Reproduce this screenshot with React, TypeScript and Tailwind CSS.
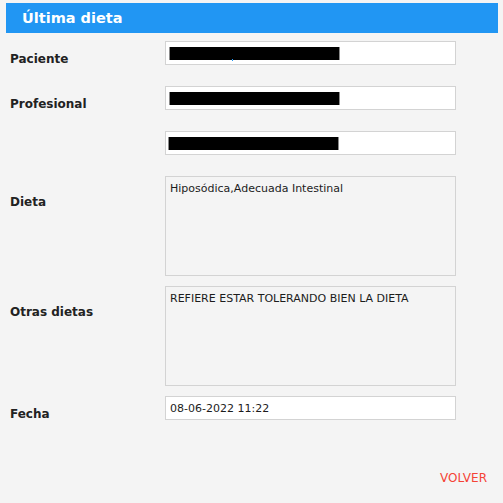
import React from "react";

const font = { fontFamily: '"DejaVu Sans", Verdana, sans-serif' };

const Label = ({ text, pad }: { text: string; pad: string }) => (
  <div className={`w-[165px] shrink-0 pl-[10px] text-[12px] leading-[12px] font-bold text-[#222] ${pad}`}>
    {text}
  </div>
);

const Redacted = ({ inset }: { inset: string }) => (
  <div className={`h-[24px] w-[291px] border border-[#d3d3d3] bg-white pt-[5px] ${inset}`}>
    <div className="h-[13px] w-[171px] bg-black border-x border-[#8a8a8a]" />
  </div>
);

export default function App() {
  return (
    <div className="min-h-screen w-full bg-[#f4f4f4] pt-[3px]" style={font}>
      <div className="ml-[6px] mr-[5px] flex h-[30px] items-center bg-[#2196f3] pl-4 pt-[2px] text-[14.5px] font-bold text-white">
        Última dieta
      </div>

      <div className="mt-[8px] flex h-[24px]">
        <Label text="Paciente" pad="pt-[12px]" />
        <div className="relative">
          <Redacted inset="pl-[3px]" />
          <span className="absolute left-[67px] top-[18px] h-[2px] w-[1px] bg-[#2196f3]" />
        </div>
      </div>

      <div className="mt-[21px] flex h-[24px]">
        <Label text="Profesional" pad="pt-[12px]" />
        <Redacted inset="pl-[3px]" />
      </div>

      <div className="mt-[21px] flex h-[24px]">
        <div className="w-[165px] shrink-0" />
        <Redacted inset="pl-[2px]" />
      </div>

      <div className="mt-[21px] flex">
        <Label text="Dieta" pad="pt-[20px]" />
        <div className="h-[100px] w-[291px] border border-[#d3d3d3] bg-[#f4f4f4] pl-[4px] pt-[5px] text-[11px] leading-[14px] text-[#1c1c1c]">
          Hiposódica,Adecuada Intestinal
        </div>
      </div>

      <div className="mt-[10px] flex">
        <Label text="Otras dietas" pad="pt-[20px]" />
        <div className="h-[100px] w-[291px] border border-[#d3d3d3] bg-[#f4f4f4] pl-[4px] pt-[5px] text-[11px] leading-[14px] text-[#1c1c1c]">
          REFIERE ESTAR TOLERANDO BIEN LA DIETA
        </div>
      </div>

      <div className="mt-[10px] flex h-[24px]">
        <Label text="Fecha" pad="pt-[12px]" />
        <div className="h-[24px] w-[291px] border border-[#d3d3d3] bg-white pl-[4px] pt-[5px] text-[11px] leading-[14px] text-[#1c1c1c]">
          08-06-2022 11:22
        </div>
      </div>

      <div className="mt-[51px] flex justify-end pr-[16px]">
        <span className="text-[12px] leading-[14px] text-[#f44336]">VOLVER</span>
      </div>
    </div>
  );
}
